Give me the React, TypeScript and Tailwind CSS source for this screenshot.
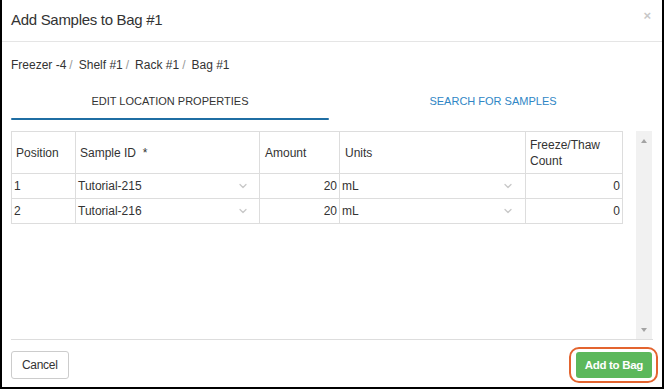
import { ChevronDown } from "lucide-react";

const rows = [
  { pos: "1", id: "Tutorial-215", amount: "20", units: "mL", count: "0" },
  { pos: "2", id: "Tutorial-216", amount: "20", units: "mL", count: "0" },
];

const crumbs = ["Freezer -4", "Shelf #1", "Rack #1", "Bag #1"];

export default function App() {
  return (
    <div className="h-[389px] w-[664px] overflow-hidden bg-white font-['Liberation_Sans',Arial,sans-serif] text-[#333]">
      <div className="flex h-[389px] w-[664px] flex-col border-b-2 border-l-2 border-r-2 border-black">
        {/* header */}
        <div className="flex h-[42px] shrink-0 items-center justify-between border-b border-[#e5e5e5] pl-[9px] pr-[11px]">
          <h1 className="text-[15px] tracking-[-0.3px]">Add Samples to Bag #1</h1>
          <span className="-mt-[10px] text-[13px] font-bold text-[#c8c8c8]">×</span>
        </div>

        <div className="flex min-h-0 flex-1 flex-col px-[9px]">
          {/* breadcrumb */}
          <div className="mt-[14px] flex text-[12px]">
            {crumbs.map((c, i) => (
              <span key={c} className="flex">
                <span>{c}</span>
                {i < crumbs.length - 1 && <span className="ml-[3px] mr-[6px] text-[#999]">/</span>}
              </span>
            ))}
          </div>

          {/* tabs */}
          <div className="mt-[19px] flex text-[11px]">
            <div className="flex w-[318px] flex-col items-center">
              <span className="h-[25px]">EDIT LOCATION PROPERTIES</span>
              <span className="h-[2px] w-full rounded-sm bg-[#1f6ea3]"></span>
            </div>
            <div className="flex flex-1 justify-center pl-[4px] text-[#2f86c5]">
              <span>SEARCH FOR SAMPLES</span>
            </div>
          </div>

          {/* table + scrollbar */}
          <div className="mt-[11px] flex min-h-0 flex-1 border-b border-[#ddd]">
            <div className="flex-1 pr-[13px]">
              <table className="w-full border-collapse text-[12px]">
                <thead>
                  <tr className="h-[42px]">
                    <th className="w-[64px] border border-[#ddd] px-[4px] text-left font-normal">Position</th>
                    <th className="w-[184px] border border-[#ddd] px-[4px] text-left font-normal">Sample ID&nbsp; *</th>
                    <th className="w-[80px] border border-[#ddd] px-[5px] text-left font-normal">Amount</th>
                    <th className="w-[186px] border border-[#ddd] px-[5px] text-left font-normal">Units</th>
                    <th className="border border-[#ddd] px-[4px] text-left font-normal leading-[16px]">
                      Freeze/Thaw
                      <br />
                      Count
                    </th>
                  </tr>
                </thead>
                <tbody>
                  {rows.map((r) => (
                    <tr key={r.pos} className="h-[25px]">
                      <td className="border border-[#ddd] px-[2px]">{r.pos}</td>
                      <td className="border border-[#ddd] px-[2px]">
                        <div className="flex items-center justify-between pr-[8px]">
                          <span>{r.id}</span>
                          <ChevronDown className="h-[12px] w-[12px] text-[#c8c8c8]" strokeWidth={2.5} />
                        </div>
                      </td>
                      <td className="border border-[#ddd] px-[2px] text-right">{r.amount}</td>
                      <td className="border border-[#ddd] px-[2px]">
                        <div className="flex items-center justify-between pr-[9px]">
                          <span>{r.units}</span>
                          <ChevronDown className="h-[12px] w-[12px] text-[#c8c8c8]" strokeWidth={2.5} />
                        </div>
                      </td>
                      <td className="border border-[#ddd] px-[2px] text-right">{r.count}</td>
                    </tr>
                  ))}
                </tbody>
              </table>
            </div>
            <div className="mr-[1px] flex w-[16px] flex-col items-center justify-between bg-[#f1f1f1] pb-[7px] pt-[8px]">
              <span className="h-0 w-0 border-x-[3px] border-b-[4px] border-x-transparent border-b-[#a3a3a3]"></span>
              <span className="h-0 w-0 border-x-[3px] border-t-[4px] border-x-transparent border-t-[#a3a3a3]"></span>
            </div>
          </div>

          {/* footer */}
          <div className="flex h-[47px] shrink-0 items-center justify-between pt-[3px]">
            <button className="h-[28px] rounded-[3px] border border-[#ccc] bg-white px-[10px] text-[12px] tracking-[-0.3px]">
              Cancel
            </button>
            <div className="mr-[-5px] rounded-[10px] border-2 border-[#e3642f] pb-[3px] pl-[5px] pr-[4px] pt-[3px]">
              <button className="h-[26px] rounded-[3px] bg-[#5cb85c] px-[9px] text-[11.5px] font-bold tracking-[-0.3px] text-white">
                Add to Bag
              </button>
            </div>
          </div>
        </div>
      </div>
    </div>
  );
}
